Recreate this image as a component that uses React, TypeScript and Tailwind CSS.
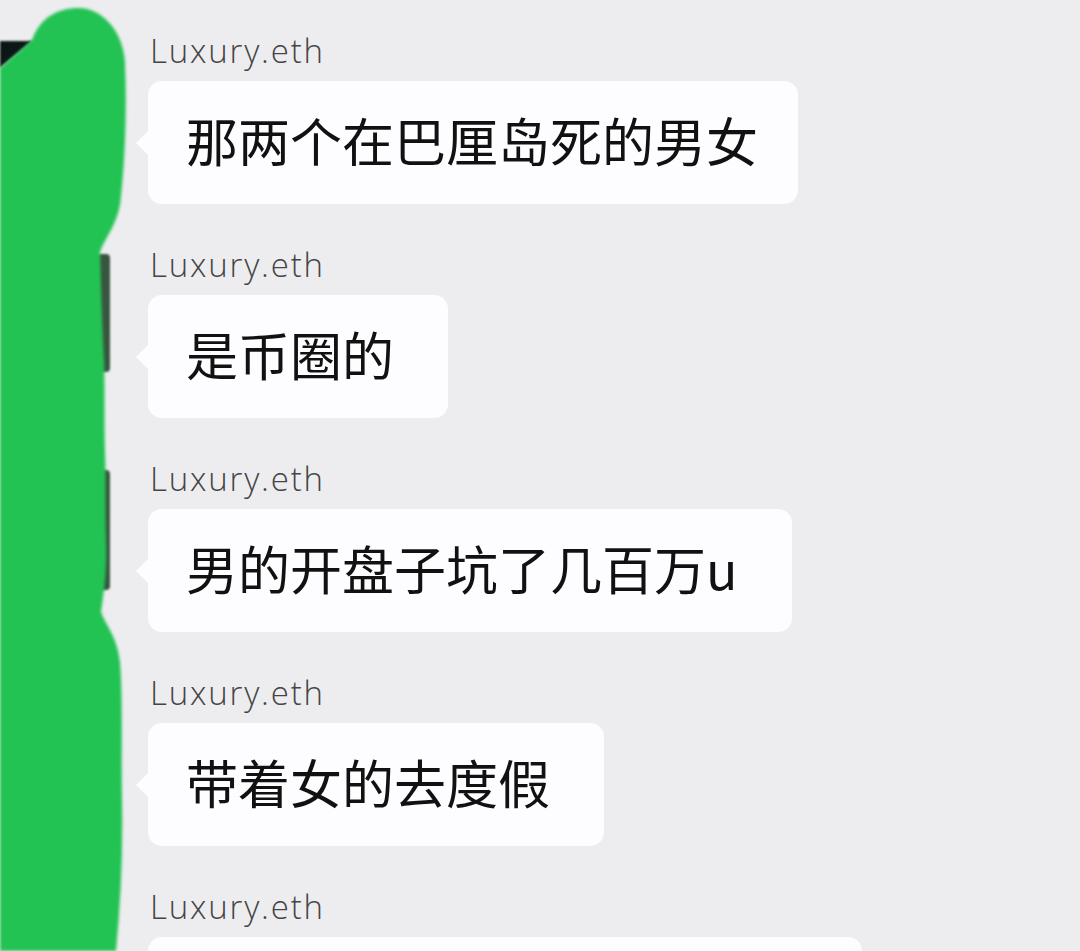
import React from "react";

type Msg = { text: string; pr: string };

const messages: Msg[] = [
  { text: "那两个在巴厘岛死的男女", pr: "pr-[40px]" },
  { text: "是币圈的", pr: "pr-[54px]" },
  { text: "男的开盘子坑了几百万u", pr: "pr-[54px]" },
  { text: "带着女的去度假", pr: "pr-[54px]" },
];

const Scribble: React.FC = () => (
  <svg width="148" height="951" viewBox="0 0 148 951" className="block">
    <defs>
      <filter id="soft" x="-10%" y="-10%" width="120%" height="120%">
        <feGaussianBlur stdDeviation="1.8" />
      </filter>
      <filter id="edge" x="-20%" y="-20%" width="140%" height="140%">
        <feGaussianBlur stdDeviation="0.8" />
      </filter>
    </defs>
    {/* bits of the hidden avatars that peek out */}
    <polygon points="0,41 33,41 0,68" fill="#0d1512" filter="url(#edge)" />
    <rect x="97" y="254" width="13" height="118" rx="4" fill="#37543f" filter="url(#edge)" />
    <rect x="97" y="470" width="13" height="120" rx="4" fill="#37543f" filter="url(#edge)" />
    <path
      d="M0,68 L0,951 L116,951 C121,900 123,850 122,800 C121,750 123,700 120,662 C117,636 106,626 101,612 C104,592 107,570 106,540 C105,505 106,475 105,452 C104,420 105,390 104,362 C102,320 101,285 100,252 C105,238 116,226 120,205 C125,165 127,110 125,62 C123,30 101,8 79,8 C57,8 40,18 32,40 Z"
      fill="#23c352"
      filter="url(#soft)"
    />
  </svg>
);

const Bubble: React.FC<{ msg: Msg }> = ({ msg }) => (
  <div className={`relative w-fit rounded-[14px] bg-[#fdfdff] pl-[38px] ${msg.pr} pt-[33px] pb-[38px]`}>
    <span className="absolute left-[-12px] top-1/2 -translate-y-1/2 h-0 w-0 border-y-[12px] border-r-[12px] border-y-transparent border-r-[#fdfdff]" />
    <p className="text-[52px] leading-none text-[#111] font-['Noto_Sans_CJK_SC','Noto_Sans',sans-serif]">
      {msg.text}
    </p>
  </div>
);

const Name: React.FC = () => (
  <div className="ml-[2px] h-[32px] text-[33px] leading-[32px] font-light tracking-[1.8px] text-[#454545] font-['Open_Sans','Noto_Sans',sans-serif]">
    Luxury.eth
  </div>
);

export default function App() {
  return (
    <div className="flex h-[951px] w-[1080px] overflow-hidden bg-[#ededf0]">
      <div className="w-[148px] shrink-0">
        <Scribble />
      </div>
      <div className="flex flex-col pt-[35px]">
        {messages.map((m, i) => (
          <div key={i} className="flex flex-col gap-[14px] pb-[45px]">
            <Name />
            <Bubble msg={m} />
          </div>
        ))}
        <div className="flex flex-col gap-[14px]">
          <Name />
          <div className="h-[123px] w-[714px] rounded-[14px] bg-[#fdfdff]" />
        </div>
      </div>
    </div>
  );
}
